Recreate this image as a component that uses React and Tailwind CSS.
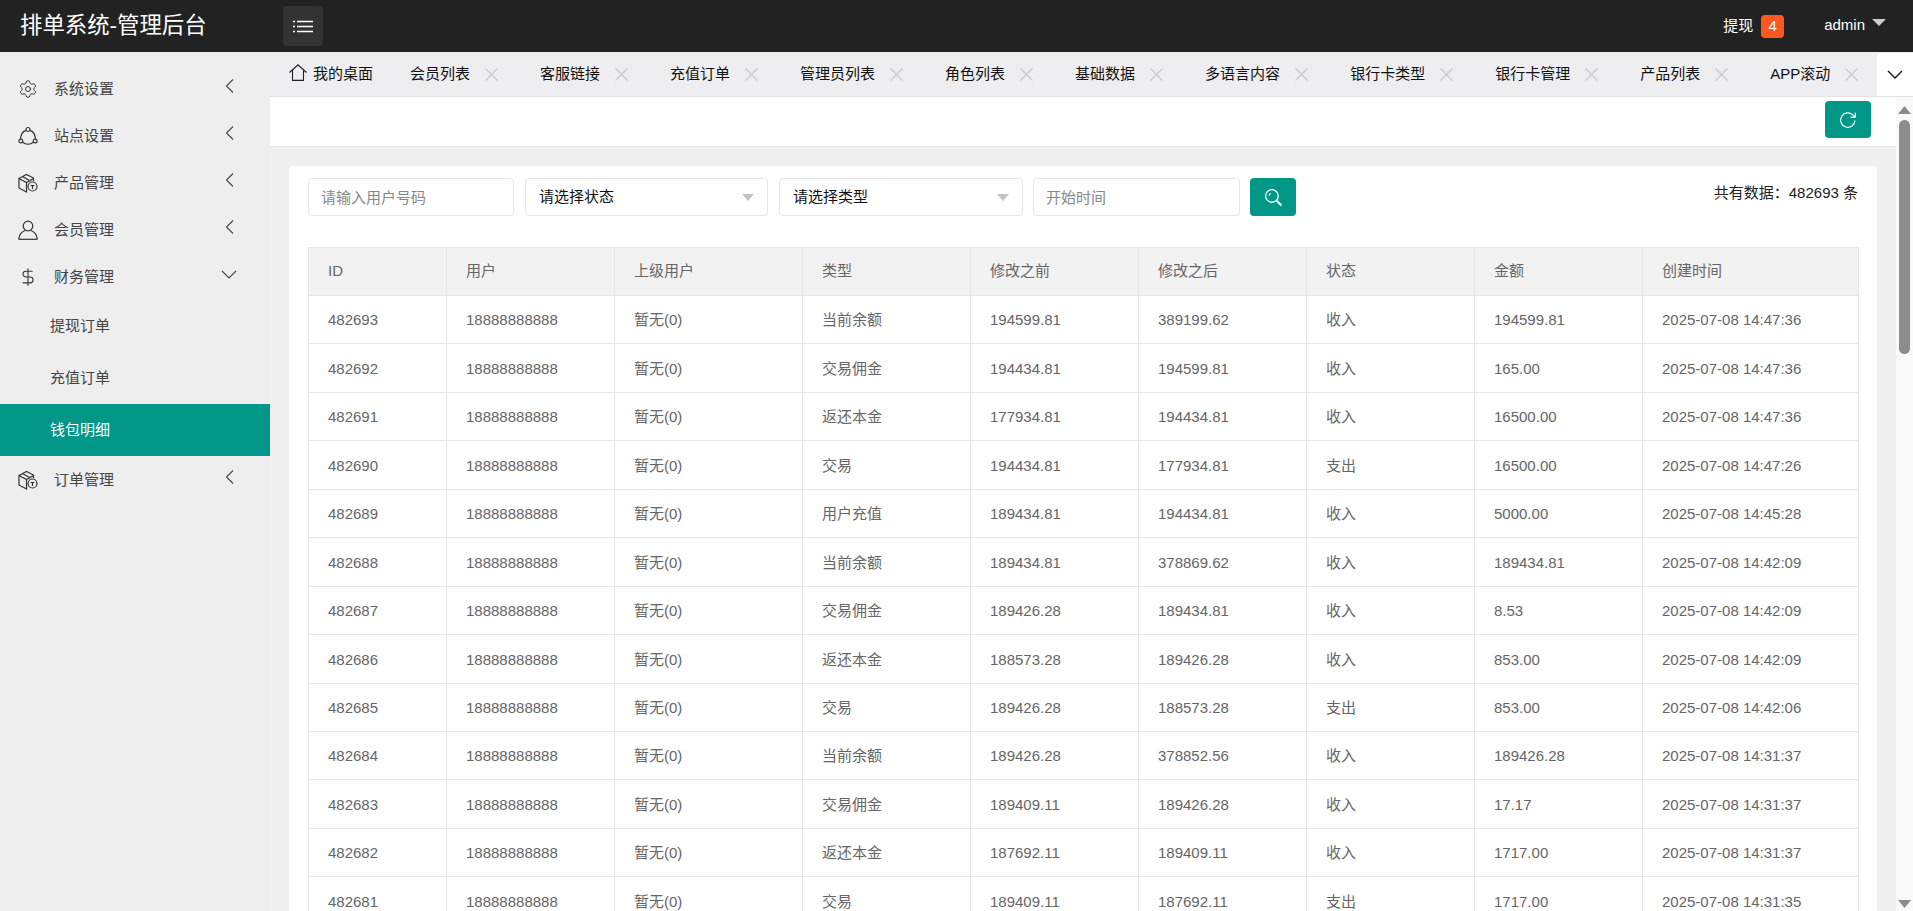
import React from 'react'
import { Settings, DollarSign } from 'lucide-react'

const tabs = ['会员列表', '客服链接', '充值订单', '管理员列表', '角色列表', '基础数据', '多语言内容', '银行卡类型', '银行卡管理', '产品列表', 'APP滚动']
const columns = ['ID', '用户', '上级用户', '类型', '修改之前', '修改之后', '状态', '金额', '创建时间']

const rows = [
  ['482693', '当前余额', '194599.81', '389199.62', '收入', '194599.81', '14:47:36'],
  ['482692', '交易佣金', '194434.81', '194599.81', '收入', '165.00', '14:47:36'],
  ['482691', '返还本金', '177934.81', '194434.81', '收入', '16500.00', '14:47:36'],
  ['482690', '交易', '194434.81', '177934.81', '支出', '16500.00', '14:47:26'],
  ['482689', '用户充值', '189434.81', '194434.81', '收入', '5000.00', '14:45:28'],
  ['482688', '当前余额', '189434.81', '378869.62', '收入', '189434.81', '14:42:09'],
  ['482687', '交易佣金', '189426.28', '189434.81', '收入', '8.53', '14:42:09'],
  ['482686', '返还本金', '188573.28', '189426.28', '收入', '853.00', '14:42:09'],
  ['482685', '交易', '189426.28', '188573.28', '支出', '853.00', '14:42:06'],
  ['482684', '当前余额', '189426.28', '378852.56', '收入', '189426.28', '14:31:37'],
  ['482683', '交易佣金', '189409.11', '189426.28', '收入', '17.17', '14:31:37'],
  ['482682', '返还本金', '187692.11', '189409.11', '收入', '1717.00', '14:31:37'],
  ['482681', '交易', '189409.11', '187692.11', '支出', '1717.00', '14:31:35'],
]

// ── icons ─────────────────────────────────────────────────────────────────────
const NodesIcon = () => (
  <svg width="20" height="20" viewBox="0 0 20 20" fill="none" stroke="#333" strokeWidth="1.2">
    <circle cx="10" cy="3.5" r="2" />
    <circle cx="2.8" cy="15" r="1.9" />
    <circle cx="17.2" cy="15" r="1.9" />
    <path d="M7.9 4.4C4.8 5.6 2.7 8.8 2.6 13M12.1 4.4c3.1 1.2 5.2 4.4 5.3 8.6M4.6 16.2c3.2 2.6 7.6 2.6 10.8 0" />
  </svg>
)

const BoxIcon = () => (
  <svg width="20" height="20" viewBox="0 0 20 20" fill="none" stroke="#333" strokeWidth="1.2">
    <path d="M1 5.5 8.5 1.5 15.5 5v3M1 5.5v9.5l7.5 4V9.500zM1 5.500 8.500 9.500l7-4" />
    <path d="M4.500 3.500l7 4" />
    <circle cx="14.500" cy="13.500" r="4.500" />
    <path d="M12.500 12.500h4M14.500 12.500v3.500" />
  </svg>
)

const UserIcon = () => (
  <svg width="20" height="20" viewBox="0 0 20 20" fill="none" stroke="#333" strokeWidth="1.2">
    <circle cx="10" cy="6" r="4.800" />
    <path d="M.8 19c.4-4.500 3.500-7.500 6.200-8.500M19.200 19c-.4-4.500-3.500-7.500-6.200-8.500" />
    <path d="M.5 19.300h19" />
  </svg>
)

const Chevron = ({ down }) => down ? (
  <svg width="16" height="9" viewBox="0 0 16 9" fill="none" stroke="#444" strokeWidth="1.1"><path d="M1 1l7 7 7-7" /></svg>
) : (
  <svg width="9" height="14" viewBox="0 0 9 14" fill="none" stroke="#444" strokeWidth="1.1"><path d="M8 .5 1.500 7 8 13.500" /></svg>
)

const Caret = () => (
  <svg width="12" height="7" viewBox="0 0 12 7" fill="#c2c2c2"><path d="M0 0h12L6 7z" /></svg>
)

const CloseMark = () => (
  <svg className="ml-[15px]" width="13" height="13" viewBox="0 0 13 13" fill="none" stroke="#c8c8c8" strokeWidth="1.1">
    <path d="M.5.5l12 12M12.500.5l-12 12" />
  </svg>
)

// ── sidebar ───────────────────────────────────────────────────────────────────
function MenuItem({ icon, label, open }) {
  return (
    <div className="flex items-center h-[47px] pl-[18px] pr-[33px] text-[#444] text-[15px]">
      <span className="w-[20px] flex justify-center">{icon}</span>
      <span className="ml-[16px] flex-1 pt-[1px]">{label}</span>
      <span className="w-[16px] flex justify-center -mt-[5px]"><Chevron down={open} /></span>
    </div>
  )
}

function Sidebar() {
  return (
    <aside className="w-[270px] shrink-0 bg-[#eeeeee] pt-[13px]">
      <MenuItem icon={<Settings size={22} strokeWidth={1.2} color="#333" />} label="系统设置" />
      <MenuItem icon={<NodesIcon />} label="站点设置" />
      <MenuItem icon={<BoxIcon />} label="产品管理" />
      <MenuItem icon={<UserIcon />} label="会员管理" />
      <MenuItem icon={<DollarSign size={22} strokeWidth={1.3} color="#333" />} label="财务管理" open />
      <div className="h-[52px] pl-[50px] flex items-center text-[15px] text-[#444]">提现订单</div>
      <div className="h-[52px] pl-[50px] flex items-center text-[15px] text-[#444]">充值订单</div>
      <div className="h-[52px] pl-[50px] flex items-center text-[15px] text-white bg-[#009688]">钱包明细</div>
      <MenuItem icon={<BoxIcon />} label="订单管理" />
    </aside>
  )
}

// ── tab strip ─────────────────────────────────────────────────────────────────
function TabBar() {
  return (
    <div className="h-[45px] shrink-0 flex bg-[#eeeef0] border-b border-[#e2e2e2] text-[15px] text-[#111]">
      <div className="flex-1 min-w-0 overflow-hidden flex items-center pl-[19px] whitespace-nowrap">
        <svg className="mr-[6px] shrink-0 -mt-[4px]" width="18" height="17" viewBox="0 0 18 17" fill="none" stroke="#222" strokeWidth="1.1">
          <path d="M.5 8.500 9 .8l8.500 7.700M3.500 6.500v9.900h11V6.500" />
        </svg>
        <span className="mr-[37px]">我的桌面</span>
        {tabs.map(t => (
          <div key={t} className="flex items-center mr-[42px] shrink-0">
            <span>{t}</span>
            <CloseMark />
          </div>
        ))}
      </div>
      <div className="w-[36px] shrink-0 mt-[1px] bg-white rounded-tl-sm flex items-center justify-center">
        <svg width="16" height="9" viewBox="0 0 16 9" fill="none" stroke="#111" strokeWidth="1.3"><path d="M1 1l7 7 7-7" /></svg>
      </div>
    </div>
  )
}

// ── filters + table ───────────────────────────────────────────────────────────
function Filters() {
  return (
    <div className="flex items-start text-[15px]">
      <input className="w-[206px] h-[38px] px-[12px] border border-[#e6e6e6] rounded-sm bg-white outline-none placeholder:text-[#888]" placeholder="请输入用户号码" />
      <div className="ml-[11px] w-[243px] h-[38px] pl-[13px] pr-[13px] border border-[#e6e6e6] rounded-sm flex items-center justify-between text-[#111]">
        <span>请选择状态</span>
        <Caret />
      </div>
      <div className="ml-[11px] w-[244px] h-[38px] pl-[13px] pr-[13px] border border-[#e6e6e6] rounded-sm flex items-center justify-between text-[#111]">
        <span>请选择类型</span>
        <Caret />
      </div>
      <input className="ml-[10px] w-[207px] h-[38px] px-[12px] border border-[#e6e6e6] rounded-sm bg-white outline-none placeholder:text-[#888]" placeholder="开始时间" />
      <button className="ml-[10px] w-[46px] h-[38px] bg-[#009688] rounded-sm flex items-center justify-center">
        <svg width="19" height="19" viewBox="0 0 18 18" fill="none" stroke="#fff" strokeWidth="1.2">
          <circle cx="7.500" cy="7.500" r="6" />
          <path d="M5 7.500c0-1.200.5-2 1.300-2.500" />
          <path d="M12 12l4.500 4.500" strokeWidth="2" />
        </svg>
      </button>
      <div className="ml-auto mt-[5px] text-[#222] leading-[20px]">共有数据：482693 条</div>
    </div>
  )
}

function DataTable() {
  return (
    <table className="w-[1550px] mt-[31px] table-fixed border-collapse text-[15px] text-[#666]">
      <colgroup>
        <col className="w-[138px]" />
        <col className="w-[168px]" />
        <col className="w-[188px]" />
        <col className="w-[168px]" />
        <col className="w-[168px]" />
        <col className="w-[168px]" />
        <col className="w-[168px]" />
        <col className="w-[168px]" />
        <col className="w-[216px]" />
      </colgroup>
      <thead>
        <tr className="bg-[#f2f2f2] h-[48px]">
          {columns.map(c => <th key={c} className="border border-[#e6e6e6] pl-[19px] text-left font-normal">{c}</th>)}
        </tr>
      </thead>
      <tbody>
        {rows.map(r => (
          <tr key={r[0]} className="h-[48.45px]">
            <td className="border border-[#e6e6e6] pl-[19px] pt-[2px]">{r[0]}</td>
            <td className="border border-[#e6e6e6] pl-[19px] pt-[2px]">18888888888</td>
            <td className="border border-[#e6e6e6] pl-[19px] pt-[2px]">暂无(0)</td>
            <td className="border border-[#e6e6e6] pl-[19px] pt-[2px]">{r[1]}</td>
            <td className="border border-[#e6e6e6] pl-[19px] pt-[2px]">{r[2]}</td>
            <td className="border border-[#e6e6e6] pl-[19px] pt-[2px]">{r[3]}</td>
            <td className="border border-[#e6e6e6] pl-[19px] pt-[2px]">{r[4]}</td>
            <td className="border border-[#e6e6e6] pl-[19px] pt-[2px]">{r[5]}</td>
            <td className="border border-[#e6e6e6] pl-[19px] pt-[2px]">2025-07-08 {r[6]}</td>
          </tr>
        ))}
      </tbody>
    </table>
  )
}

function Scrollbar() {
  return (
    <div className="w-[17px] shrink-0 bg-[#f9f9f9] flex flex-col items-center justify-between relative">
      <div className="flex flex-col items-center pt-[9px]">
        <svg width="13" height="8" viewBox="0 0 13 8" fill="#8c8c8c"><path d="M6.500 0 13 8H0z" /></svg>
        <div className="w-[11px] h-[234px] mt-[6px] bg-[#8c8c8c] rounded-full" />
      </div>
      <svg className="mb-[3px]" width="13" height="8" viewBox="0 0 13 8" fill="#8c8c8c"><path d="M0 0h13L6.500 8z" /></svg>
    </div>
  )
}

export default function App() {
  return (
    <div className="h-screen overflow-hidden flex flex-col bg-white font-['Liberation_Sans','Noto_Sans_CJK_SC',sans-serif]">
      <header className="h-[52px] shrink-0 bg-[#222222] flex items-center text-white">
        <div className="w-[283px] pl-[20px] text-[22.4px]">排单系统-管理后台</div>
        <button className="w-[40px] h-[40px] bg-[#333333] rounded-sm flex items-center justify-center">
          <svg width="20" height="13" viewBox="0 0 20 13" fill="none" stroke="#fff" strokeWidth="1.4">
            <path d="M0 1.500h2M4 1.500h16M0 6.500h2M4 6.500h16M0 11.500h2M4 11.500h16" />
          </svg>
        </button>
        <div className="ml-auto flex items-center pr-[27px] text-[15px]">
          <span>提现</span>
          <span className="ml-[8px] w-[23px] h-[23px] bg-[#ff5722] rounded-sm flex items-center justify-center text-[15px]">4</span>
          <span className="ml-[40px] -mt-[1px]">admin</span>
          <svg className="ml-[7px] -mt-[7px]" width="14" height="7" viewBox="0 0 14 7" fill="#cccccc"><path d="M0 0h14L7 7z" /></svg>
        </div>
      </header>
      <div className="flex-1 min-h-0 flex">
        <Sidebar />
        <main className="flex-1 min-w-0 flex flex-col">
          <TabBar />
          <div className="flex-1 min-h-0 flex">
            <div className="flex-1 min-w-0 overflow-hidden bg-[#f0f0f0]">
              <div className="h-[50px] bg-white border-b border-[#e6e6e6] flex items-start justify-end pt-[4px] pr-[25px]">
                <button className="w-[46px] h-[37px] bg-[#009688] rounded-sm flex items-center justify-center">
                  <svg width="18" height="18" viewBox="0 0 18 18" fill="none" stroke="#fff" strokeWidth="1.2">
                    <path d="M16 9.500a7.200 7.200 0 1 1-2.200-5.600L16 6" />
                    <path d="M16.300 1.500V6.200h-4.700" />
                  </svg>
                </button>
              </div>
              <div className="px-[19px] pt-[19px]">
                <div className="bg-white rounded-sm px-[19px] pt-[12px] pb-[20px]">
                  <Filters />
                  <DataTable />
                </div>
              </div>
            </div>
            <Scrollbar />
          </div>
        </main>
      </div>
    </div>
  )
}
